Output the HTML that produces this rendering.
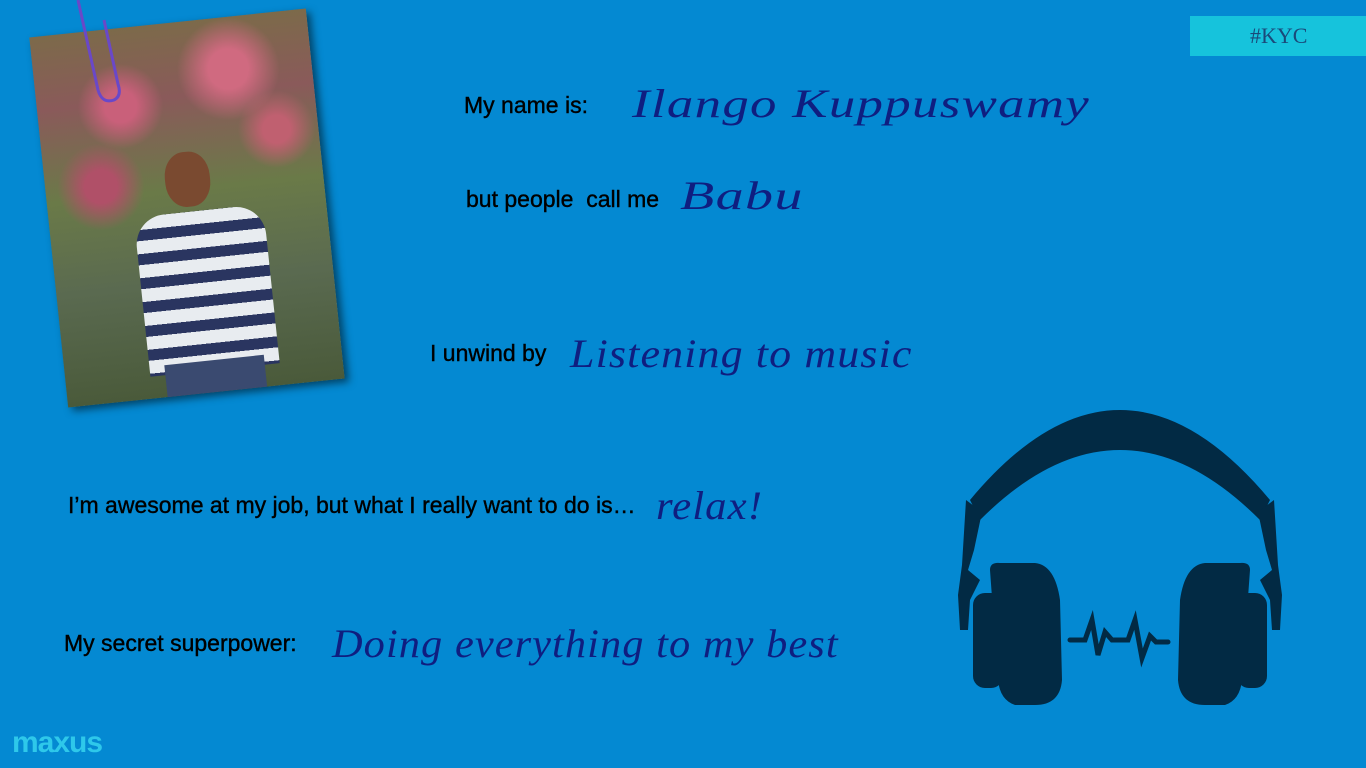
<!DOCTYPE html>
<html><head><style>
body{margin:0;width:1366px;height:768px;background:#0489d2;position:relative;overflow:hidden;font-family:"Liberation Sans",sans-serif}
.l{position:absolute;color:#000;font-size:23px;-webkit-text-stroke:0.4px #000;white-space:nowrap}
.v{position:absolute;color:#0f1e80;font-family:"Liberation Serif",serif;font-style:italic;font-size:40px;letter-spacing:1px;transform-origin:left;white-space:nowrap}
</style></head><body>
<div style="position:absolute;left:1190px;top:16px;width:176px;height:40px;background:#16c3dc;color:#1a4a7a;font-family:'Liberation Serif',serif;font-size:22px;line-height:40px;text-indent:60px">#KYC</div>
<div style="position:absolute;left:48px;top:22px;width:278px;height:372px;transform:rotate(-6deg);box-shadow:4px 4px 8px rgba(0,0,0,.5);background:linear-gradient(180deg,#7c6a4a 0%,#8a5a5a 20%,#6a7a48 45%,#5a6a50 70%,#4a5a3a 100%);overflow:hidden">
 <div style="position:absolute;left:0;top:0;width:100%;height:70%;background:radial-gradient(circle at 30% 30%,#c9607a 0 6%,transparent 16%),radial-gradient(circle at 70% 20%,#d06a80 0 7%,transparent 18%),radial-gradient(circle at 20% 60%,#b05068 0 6%,transparent 16%),radial-gradient(circle at 85% 45%,#c06070 0 5%,transparent 14%)"></div>
 <div style="position:absolute;left:120px;top:130px;width:45px;height:55px;border-radius:45%;background:#7a4a30"></div>
 <div style="position:absolute;left:85px;top:190px;width:130px;height:160px;border-radius:30px 30px 0 0;background:repeating-linear-gradient(180deg,#e8ecf0 0 13px,#2a3560 13px 24px)"></div>
 <div style="position:absolute;left:100px;top:340px;width:100px;height:40px;background:#3a4a70"></div>
</div>
<svg style="position:absolute;left:70px;top:0" width="60" height="110"><path d="M8 0 L28 90 Q32 104 44 100 Q52 96 48 84 L34 20" fill="none" stroke="#6a48c8" stroke-width="3"/></svg>
<div class="l" style="left:464px;top:92px">My name is:</div>
<div class="v" style="left:632px;top:80px;transform:scaleX(1.32)">Ilango Kuppuswamy</div>
<div class="l" style="left:466px;top:186px">but people&nbsp; call me</div>
<div class="v" style="left:680px;top:172px;transform:scaleX(1.4)">Babu</div>
<div class="l" style="left:430px;top:340px">I unwind by</div>
<div class="v" style="left:570px;top:330px;transform:scaleX(1.1)">Listening to music</div>
<div class="l" style="left:68px;top:492px">I’m awesome at my job, but what I really want to do is…</div>
<div class="v" style="left:656px;top:482px;transform:scaleX(1.07)">relax!</div>
<div class="l" style="left:64px;top:630px">My secret superpower:</div>
<div class="v" style="left:332px;top:620px;transform:scaleX(1.06)">Doing everything to my best</div>
<div style="position:absolute;left:12px;top:726px;color:#2ec8ea;font-size:30px;font-weight:bold;letter-spacing:-1px">maxus</div>
<svg style="position:absolute;left:940px;top:400px" width="360" height="320" viewBox="0 0 360 320" fill="#022a44">
<path d="M30 100 Q180 -80 330 100 L320 120 Q180 -20 40 120 Z"/>
<path d="M26 100 L42 112 L34 150 L28 170 L40 180 L30 200 L28 230 L20 230 L18 195 L22 165 Z"/>
<path d="M334 100 L318 112 L326 150 L332 170 L320 180 L330 200 L332 230 L340 230 L342 195 L338 165 Z"/>
<rect x="33" y="193" width="30" height="95" rx="12"/>
<path d="M50 170 Q50 162 60 163 L95 163 Q115 165 120 200 L122 280 Q120 305 95 305 L75 305 Q60 300 58 280 Z"/>
<rect x="297" y="193" width="30" height="95" rx="12"/>
<path d="M310 170 Q310 162 300 163 L265 163 Q245 165 240 200 L238 280 Q240 305 265 305 L285 305 Q300 300 302 280 Z"/>
<path d="M130 240 L145 240 L152 220 L158 255 L165 232 L172 240 L188 240 L195 220 L202 258 L210 236 L216 242 L228 242" fill="none" stroke="#022a44" stroke-width="5" stroke-linecap="round"/>
</svg>
</body></html>
